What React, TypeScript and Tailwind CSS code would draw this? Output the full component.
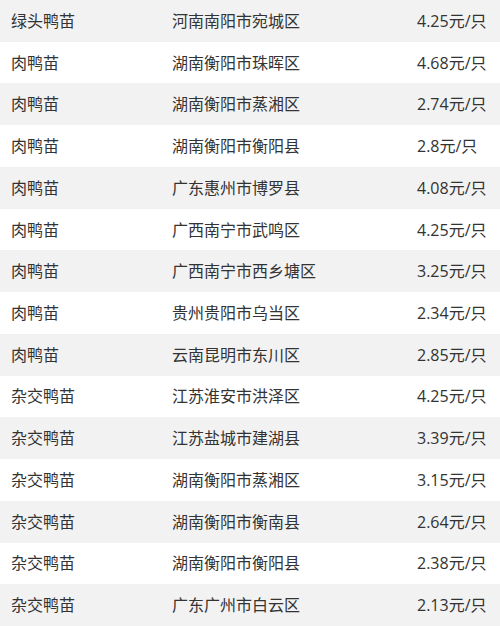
import React from "react";

const rows: [string, string, string][] = [
  ["绿头鸭苗", "河南南阳市宛城区", "4.25元/只"],
  ["肉鸭苗", "湖南衡阳市珠晖区", "4.68元/只"],
  ["肉鸭苗", "湖南衡阳市蒸湘区", "2.74元/只"],
  ["肉鸭苗", "湖南衡阳市衡阳县", "2.8元/只"],
  ["肉鸭苗", "广东惠州市博罗县", "4.08元/只"],
  ["肉鸭苗", "广西南宁市武鸣区", "4.25元/只"],
  ["肉鸭苗", "广西南宁市西乡塘区", "3.25元/只"],
  ["肉鸭苗", "贵州贵阳市乌当区", "2.34元/只"],
  ["肉鸭苗", "云南昆明市东川区", "2.85元/只"],
  ["杂交鸭苗", "江苏淮安市洪泽区", "4.25元/只"],
  ["杂交鸭苗", "江苏盐城市建湖县", "3.39元/只"],
  ["杂交鸭苗", "湖南衡阳市蒸湘区", "3.15元/只"],
  ["杂交鸭苗", "湖南衡阳市衡南县", "2.64元/只"],
  ["杂交鸭苗", "湖南衡阳市衡阳县", "2.38元/只"],
  ["杂交鸭苗", "广东广州市白云区", "2.13元/只"],
];

export default function App() {
  return (
    <div
      className="w-[500px] h-[626px] flex flex-col bg-white text-[16px] text-[#333333]"
      style={{ fontFamily: '"Open Sans", "Noto Sans CJK SC", sans-serif' }}
    >
      {rows.map((r, i) => (
        <div
          key={i}
          className={`flex-1 grid grid-cols-[172px_245px_1fr] items-center ${
            i % 2 === 0 ? "bg-[#f2f2f2]" : "bg-white"
          }`}
        >
          <div className="pl-[11px] leading-none">{r[0]}</div>
          <div className="leading-none">{r[1]}</div>
          <div className="leading-none">{r[2]}</div>
        </div>
      ))}
    </div>
  );
}
